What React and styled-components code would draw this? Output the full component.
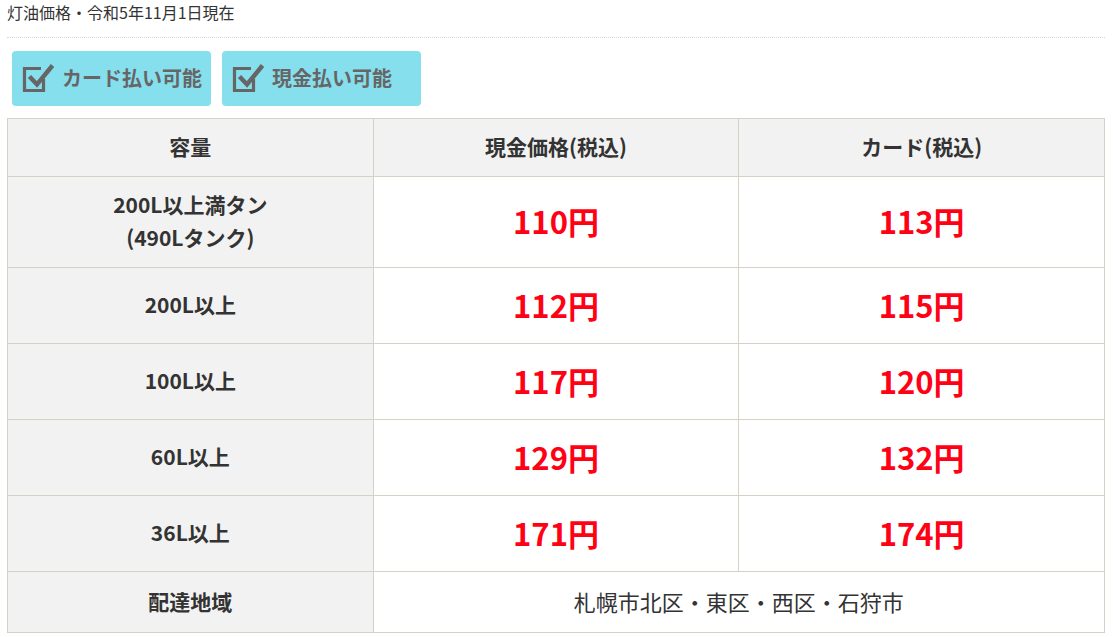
import React from 'react'
import styled, { createGlobalStyle } from 'styled-components'

const GlobalStyle = createGlobalStyle`
  body {
    margin: 0;
    background: #fff;
    font-family: "Noto Sans CJK JP", "Noto Sans", sans-serif;
    color: #333;
  }
`

const rows = [
  { label: ['200L以上満タン', '(490Lタンク)'], cash: '110円', card: '113円', h: 91 },
  { label: ['200L以上'], cash: '112円', card: '115円', h: 76 },
  { label: ['100L以上'], cash: '117円', card: '120円', h: 76 },
  { label: ['60L以上'], cash: '129円', card: '132円', h: 76 },
  { label: ['36L以上'], cash: '171円', card: '174円', h: 76 },
]

const CheckIcon = () => (
  <svg width="32" height="29" viewBox="0 0 32 29">
    <path d="M19 5.5H2.5V27.5H21.5V16" fill="none" stroke="#666" strokeWidth="3.2" />
    <path d="M7.5 13.5L15 21.5L30.5 2.5" fill="none" stroke="#666" strokeWidth="4.4" strokeLinejoin="miter" />
  </svg>
)

const App = () => {
  return (
    <Page>
      <GlobalStyle />
      <Caption>灯油価格・令和5年11月1日現在</Caption>
      <Badges>
        <Badge>
          <CheckIcon />
          カード払い可能
        </Badge>
        <Badge>
          <CheckIcon />
          現金払い可能
        </Badge>
      </Badges>
      <PriceTable>
        <thead>
          <tr>
            <HeadCell $h={58}>容量</HeadCell>
            <HeadCell $h={58}>現金価格(税込)</HeadCell>
            <HeadCell $h={58}>カード(税込)</HeadCell>
          </tr>
        </thead>
        <tbody>
          {rows.map(r => (
            <tr key={r.cash}>
              <LabelCell $h={r.h}>
                {r.label.map((l, i) => (
                  <LabelLine key={i}>{l}</LabelLine>
                ))}
              </LabelCell>
              <PriceCell $h={r.h}>{r.cash}</PriceCell>
              <PriceCell $h={r.h}>{r.card}</PriceCell>
            </tr>
          ))}
          <tr>
            <LabelCell $h={61}>配達地域</LabelCell>
            <AreaCell colSpan={2}>札幌市北区・東区・西区・石狩市</AreaCell>
          </tr>
        </tbody>
      </PriceTable>
    </Page>
  )
}

export default App

const Page = styled.div`
  padding: 0 8px 0 7px;
  width: 1098px;
`

const Caption = styled.div`
  font-size: 16px;
  line-height: 20px;
  padding: 2px 0 15px;
  color: #333;
  border-bottom: 1px dotted #d8d8d0;
`

const Badges = styled.div`
  display: flex;
  gap: 11px;
  padding: 13px 0 0 5px;
  margin-bottom: 12px;
`

const Badge = styled.div`
  display: flex;
  align-items: center;
  gap: 8px;
  width: 199px;
  height: 55px;
  box-sizing: border-box;
  padding: 0 0 2px 10px;
  background: #86dfed;
  border-radius: 4px;
  color: #666;
  font-size: 20px;
  font-weight: 700;
`

const PriceTable = styled.table`
  width: 1098px;
  border-collapse: collapse;
  table-layout: fixed;
  border: 1px solid #d6d1c6;
`

const cellBase = `
  border: 1px solid #d6d1c6;
  text-align: center;
  vertical-align: middle;
  padding: 0 0 3px;
  box-sizing: border-box;
`

const HeadCell = styled.th`
  ${cellBase}
  height: ${p => p.$h}px;
  background: #f2f2f2;
  font-size: 21px;
  font-weight: 700;
  color: #333;
`

const LabelCell = styled.th`
  ${cellBase}
  height: ${p => p.$h}px;
  background: #f2f2f2;
  font-size: 21px;
  font-weight: 700;
  color: #333;
`

const LabelLine = styled.div`
  line-height: 33px;
`

const PriceCell = styled.td`
  ${cellBase}
  height: ${p => p.$h}px;
  background: #fff;
  color: #ff0015;
  font-size: 31px;
  font-weight: 700;
`

const AreaCell = styled.td`
  ${cellBase}
  background: #fff;
  font-size: 22px;
  color: #333;
`
